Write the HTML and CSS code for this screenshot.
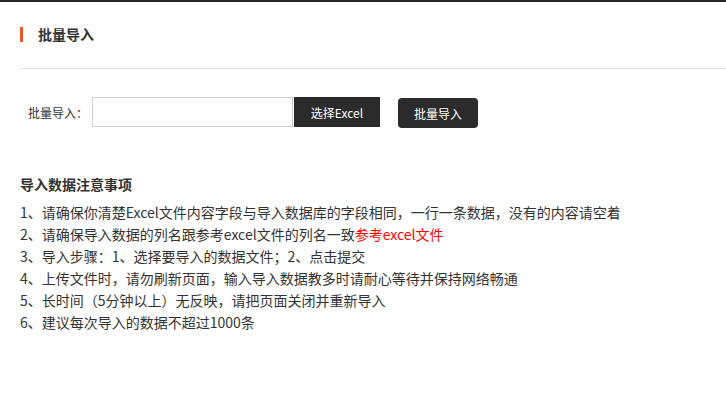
FILE: index.html
```html
<!DOCTYPE html>
<html lang="zh-CN">
<head>
<meta charset="utf-8">
<title>批量导入</title>
<link rel="stylesheet" href="styles.css">
</head>
<body>
<div class="page">
  <div class="header">
    <span class="header-bar"></span>
    <span class="header-title">批量导入</span>
  </div>
  <div class="form-row">
    <label class="form-label">批量导入：</label>
    <input class="file-input" type="text">
    <button class="btn btn-select">选择Excel</button>
    <button class="btn btn-import">批量导入</button>
  </div>
  <div class="notes">
    <div class="notes-title">导入数据注意事项</div>
    <ul class="notes-list">
      <li>1、请确保你清楚Excel文件内容字段与导入数据库的字段相同，一行一条数据，没有的内容请空着</li>
      <li>2、请确保导入数据的列名跟参考excel文件的列名一致<a class="ref-link" href="#">参考excel文件</a></li>
      <li>3、导入步骤：1、选择要导入的数据文件；2、点击提交</li>
      <li>4、上传文件时，请勿刷新页面，输入导入数据教多时请耐心等待并保持网络畅通</li>
      <li>5、长时间（5分钟以上）无反映，请把页面关闭并重新导入</li>
      <li>6、建议每次导入的数据不超过1000条</li>
    </ul>
  </div>
</div>
</body>
</html>
```
FILE: styles.css
```css
html, body {
  margin: 0;
  padding: 0;
  background: #fff;
}
body {
  font-family: "Noto Sans CJK SC", "Noto Sans", sans-serif;
  color: #333;
  border-top: 2px solid #262626;
}
.page {
  padding-left: 20px;
}
.header {
  height: 64px;
  padding-bottom: 2px;
  display: flex;
  align-items: center;
  border-bottom: 1px solid #e5e5e5;
}
.header-bar {
  width: 3px;
  height: 15px;
  background: #e8572a;
  margin-right: 15px;
}
.header-title {
  font-size: 14px;
  font-weight: bold;
  color: #333;
  line-height: 20px;
}
.form-row {
  display: flex;
  align-items: center;
  margin-top: 28px;
  padding-left: 8px;
  height: 30px;
}
.form-label {
  font-size: 12px;
  color: #333;
  width: 60px;
  margin-right: 4px;
}
.file-input {
  box-sizing: border-box;
  width: 201px;
  height: 30px;
  border: 1px solid #cfcfcf;
  margin: 0;
  padding: 0 6px;
  outline: none;
}
.btn {
  font-family: "Noto Sans CJK SC", "Noto Sans", sans-serif;
  font-size: 12px;
  color: #fff;
  background: #2b2b2b;
  border: none;
  height: 30px;
  padding: 0;
  margin: 0;
}
.btn-select {
  width: 86px;
  margin-left: 1px;
}
.btn-import {
  width: 80px;
  margin-left: 18px;
  border-radius: 4px;
  position: relative;
  top: 1px;
}
.notes {
  margin-top: 46px;
}
.notes-title {
  font-size: 14px;
  font-weight: bold;
  line-height: 22px;
  color: #333;
}
.notes-list {
  list-style: none;
  margin: 6px 0 0;
  padding: 0;
}
.notes-list li {
  font-size: 14px;
  line-height: 22px;
  color: #333;
}
.ref-link {
  color: #ff0000;
  text-decoration: none;
}
```
